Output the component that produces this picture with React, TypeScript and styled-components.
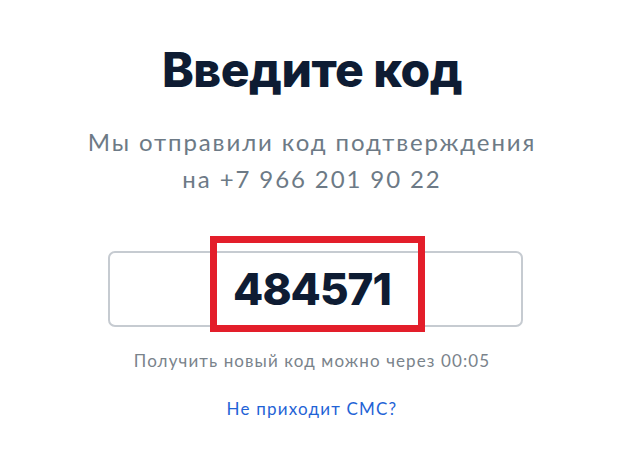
import React from "react";
import styled, { createGlobalStyle } from "styled-components";

const Global = createGlobalStyle`
  html, body { margin: 0; padding: 0; background: #ffffff; }
  body { font-family: "Lato", "Noto Sans", sans-serif; }
`;

const Page = styled.div`
  width: 624px;
  height: 467px;
  display: flex;
  flex-direction: column;
  align-items: center;
  padding-top: 40px;
  box-sizing: border-box;
`;

const Title = styled.h1`
  margin: 0;
  font-family: "Inter", sans-serif;
  font-weight: 800;
  font-size: 48px;
  line-height: 60px;
  letter-spacing: -0.5px;
  color: #0e1c33;
`;

const Subtitle = styled.p`
  margin: 23px 0 0;
  font-family: "Lato", sans-serif;
  font-size: 24px;
  line-height: 37px;
  letter-spacing: 1.9px;
  color: #6d7a86;
  text-align: center;
`;

const Field = styled.div`
  position: relative;
  margin-top: 54px;
  margin-left: 6px;
  width: 415px;
  height: 76px;
  box-sizing: border-box;
  border: 2px solid #c6cbd1;
  border-radius: 7px;
  display: flex;
  align-items: center;
  justify-content: center;
`;

const Code = styled.span`
  font-family: "Inter", sans-serif;
  font-weight: 800;
  font-size: 44px;
  letter-spacing: -1px;
  color: #0e1c33;
  margin-left: -6px;
`;

const Highlight = styled.div`
  position: absolute;
  left: 100px;
  top: -17px;
  width: 215px;
  height: 96px;
  box-sizing: border-box;
  border: 7px solid #e31e2a;
  pointer-events: none;
`;

const Hint = styled.p`
  margin: 23px 0 0;
  font-family: "Lato", sans-serif;
  font-size: 17px;
  line-height: 22px;
  letter-spacing: 1.1px;
  color: #7a838b;
`;

const Link = styled.a`
  margin-top: 26px;
  font-family: "Lato", sans-serif;
  font-size: 17px;
  line-height: 22px;
  letter-spacing: 1.2px;
  color: #1f63d6;
  text-decoration: none;
  cursor: pointer;
`;

export default function App() {
  return (
    <>
      <Global />
      <Page>
        <Title>Введите код</Title>
        <Subtitle>
          Мы отправили код подтверждения
          <br />
          на +7 966 201 90 22
        </Subtitle>
        <Field>
          <Code>484571</Code>
          <Highlight />
        </Field>
        <Hint>Получить новый код можно через 00:05</Hint>
        <Link>Не приходит СМС?</Link>
      </Page>
    </>
  );
}
